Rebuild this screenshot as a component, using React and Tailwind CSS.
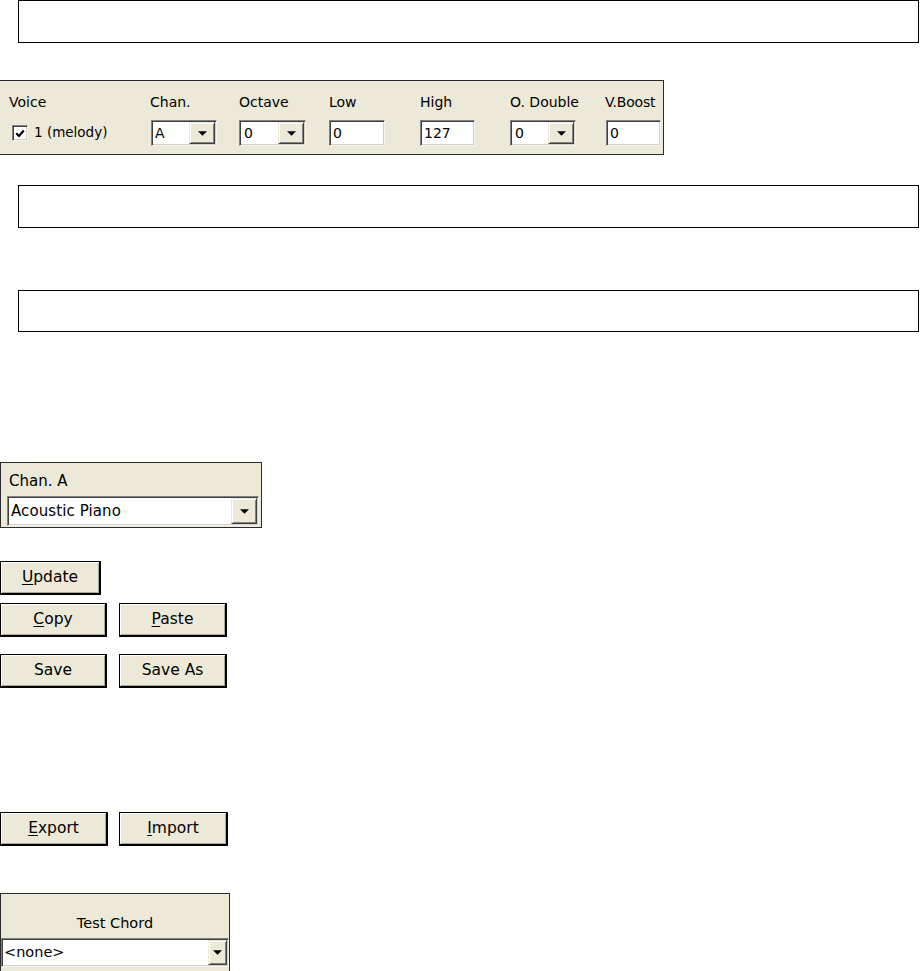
import React from "react";

const Arrow = ({ w = 8, h = 4 }) => (
  <svg width={w} height={h} viewBox="0 0 8 4">
    <path d="M0 0 H8 L4 4 Z" fill="#000" />
  </svg>
);

const ArrowBtn = ({ className, aw, ah }) => (
  <div
    className={
      "flex items-center justify-center bg-[#ece9d8] border border-t-[#ece9d8] border-l-[#ece9d8] border-b-[#404040] border-r-[#404040] shadow-[inset_1px_1px_0_#ffffff,inset_-1px_-1px_0_#808080] " +
      className
    }
  >
    <Arrow w={aw} h={ah} />
  </div>
);

const Combo = ({ value, className, btnClass, textClass, aw, ah }) => (
  <div
    className={
      "flex items-center bg-white border border-t-[#808080] border-l-[#808080] border-b-[#f4f3ee] border-r-[#f4f3ee] shadow-[inset_1px_1px_0_#404040,inset_-1px_-1px_0_#d4d0c8] " +
      className
    }
  >
    <span className={"flex-1 leading-none " + textClass}>{value}</span>
    <ArrowBtn className={btnClass} aw={aw} ah={ah} />
  </div>
);

const Field = ({ value, className }) => (
  <div
    className={
      "flex items-center bg-white border border-t-[#808080] border-l-[#808080] border-b-[#f4f3ee] border-r-[#f4f3ee] shadow-[inset_1px_1px_0_#404040,inset_-1px_-1px_0_#d4d0c8] pl-[3px] leading-none " +
      className
    }
  >
    {value}
  </div>
);

const Btn = ({ children, className = "" }) => (
  <div
    className={
      "flex items-center justify-center h-[34px] bg-[#ece9d8] border border-black border-b-2 border-r-2 shadow-[inset_1px_1px_0_#ffffff,inset_-1px_-1px_0_#aca899] text-[15.5px] text-black leading-none " +
      className
    }
  >
    {children}
  </div>
);

const U = ({ children }) => <span className="underline underline-offset-2">{children}</span>;

export default function App() {
  return (
    <div className="w-[920px] h-[971px] bg-white overflow-hidden font-['DejaVu_Sans',sans-serif] text-black">
      {/* empty box 1 */}
      <div className="ml-[18px] w-[901px] h-[43px] border border-black" />

      {/* Voice panel */}
      <div className="mt-[37px] w-[664px] h-[75px] bg-[#ece9d8] border border-[#2b2b2b] border-l-0 flex pt-[12px] text-[14px]">
        <div className="w-[150px] pl-[9px] flex flex-col">
          <div className="h-[18px] leading-[18px]">Voice</div>
          <div className="mt-[9px] h-[26px] flex items-center pl-[3px]">
            <div className="w-[16px] h-[16px] bg-white border border-t-[#808080] border-l-[#808080] border-b-[#f4f3ee] border-r-[#f4f3ee] shadow-[inset_1px_1px_0_#404040,inset_-1px_-1px_0_#d4d0c8] flex items-center justify-center">
              <svg width="10" height="9" viewBox="0 0 10 9">
                <path d="M1.2 4.2 L4 7 L8.8 1.6" stroke="#000" strokeWidth="2.2" fill="none" />
              </svg>
            </div>
            <span className="ml-[6px] leading-none text-[13.5px]">1 (melody)</span>
          </div>
        </div>
        <div className="w-[89px] flex flex-col">
          <div className="h-[18px] leading-[18px]">Chan.</div>
          <Combo value="A" className="mt-[9px] ml-[1px] w-[66px] h-[26px] pr-[1px]" btnClass="w-[26px] h-[22px]" textClass="pl-[3px]" aw={9} ah={5} />
        </div>
        <div className="w-[90px] flex flex-col">
          <div className="h-[18px] leading-[18px]">Octave</div>
          <Combo value="0" className="mt-[9px] w-[67px] h-[26px] pr-[1px]" btnClass="w-[26px] h-[22px]" textClass="pl-[4px]" aw={9} ah={5} />
        </div>
        <div className="w-[91px] flex flex-col">
          <div className="h-[18px] leading-[18px]">Low</div>
          <Field value="0" className="mt-[9px] w-[56px] h-[26px]" />
        </div>
        <div className="w-[90px] flex flex-col">
          <div className="h-[18px] leading-[18px]">High</div>
          <Field value="127" className="mt-[9px] w-[55px] h-[26px]" />
        </div>
        <div className="w-[95px] flex flex-col">
          <div className="h-[18px] leading-[18px] whitespace-nowrap">O. Double</div>
          <Combo value="0" className="mt-[9px] w-[66px] h-[26px] pr-[1px]" btnClass="w-[26px] h-[22px]" textClass="pl-[4px]" aw={9} ah={5} />
        </div>
        <div className="flex-1 flex flex-col">
          <div className="h-[18px] leading-[18px] whitespace-nowrap tracking-[-0.2px]">V.Boost</div>
          <Field value="0" className="mt-[9px] ml-[1px] w-[55px] h-[26px]" />
        </div>
      </div>

      {/* empty box 2 */}
      <div className="mt-[30px] ml-[18px] w-[901px] h-[43px] border border-black" />

      {/* empty box 3 */}
      <div className="mt-[62px] ml-[18px] w-[901px] h-[42px] border border-black" />

      {/* Chan. A panel */}
      <div className="mt-[130px] w-[262px] h-[66px] bg-[#ece9d8] border border-[#2b2b2b] flex flex-col px-[6px]">
        <div className="mt-[9px] ml-[2px] h-[18px] leading-[18px] text-[15px]">Chan. A</div>
        <Combo
          value="Acoustic Piano"
          className="mt-[6px] w-[252px] h-[30px] pr-[1px]"
          btnClass="w-[26px] h-[26px]"
          textClass="pl-[3px] text-[15px] tracking-[0.1px]"
          aw={9}
          ah={5}
        />
      </div>

      {/* Update */}
      <Btn className="mt-[33px] w-[101px]">
        <span><U>U</U>pdate</span>
      </Btn>

      {/* Copy / Paste */}
      <div className="mt-[8px] flex gap-[12px]">
        <Btn className="w-[107px]"><span><U>C</U>opy</span></Btn>
        <Btn className="w-[108px]"><span><U>P</U>aste</span></Btn>
      </div>

      {/* Save / Save As */}
      <div className="mt-[17px] flex gap-[12px]">
        <Btn className="w-[107px]">Save</Btn>
        <Btn className="w-[108px]">Save As</Btn>
      </div>

      {/* Export / Import */}
      <div className="mt-[124px] flex gap-[11px]">
        <Btn className="w-[108px]"><span><U>E</U>xport</span></Btn>
        <Btn className="w-[109px]"><span><U>I</U>mport</span></Btn>
      </div>

      {/* Test Chord panel */}
      <div className="mt-[47px] w-[230px] h-[79px] bg-[#ece9d8] border border-[#2b2b2b] flex flex-col">
        <div className="mt-[20px] h-[18px] leading-[18px] text-[14.5px] text-center">Test Chord</div>
        <Combo
          value="<none>"
          className="mt-[6px] w-[228px] h-[29px] pr-[1px]"
          btnClass="w-[19px] h-[25px]"
          textClass="pl-[2px] text-[14.5px]"
          aw={9}
          ah={5}
        />
      </div>
    </div>
  );
}
